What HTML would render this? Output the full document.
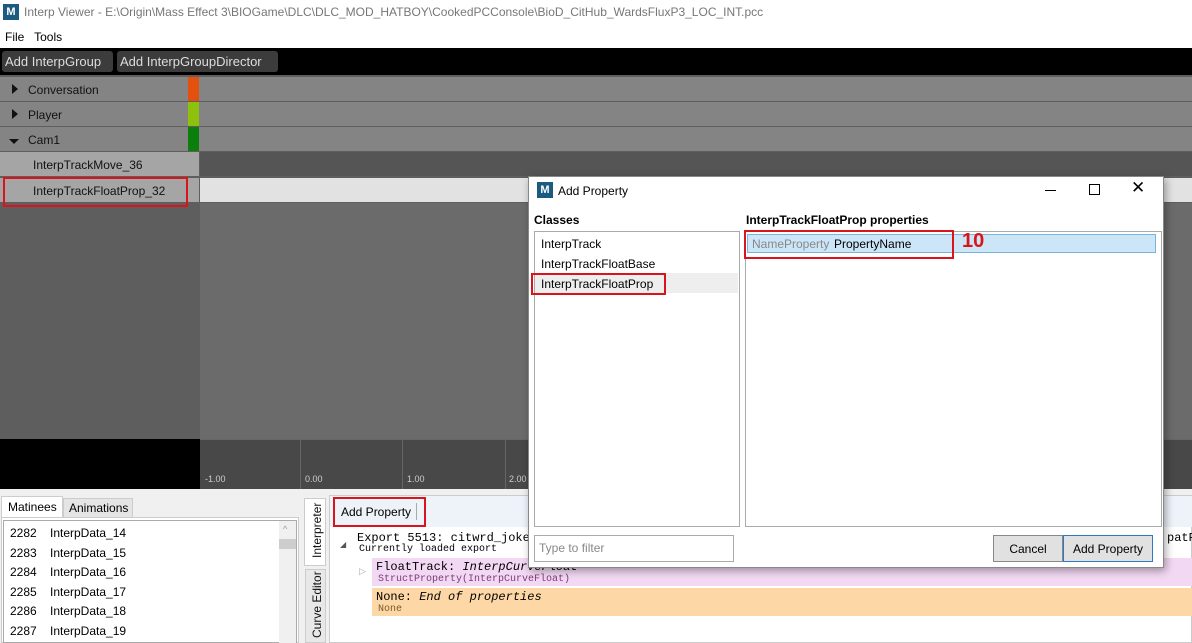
<!DOCTYPE html>
<html><head><style>
*{margin:0;padding:0;box-sizing:border-box}
body{width:1192px;height:643px;overflow:hidden;position:relative;font-family:"Liberation Sans",sans-serif;font-size:12px;background:#f0f0f0}
.a{position:absolute;white-space:nowrap}
.mono{font-family:"Liberation Mono",monospace;font-size:11px}
.red{position:absolute;border:2px solid #d9141b}
</style></head><body>
<div class="a" style="left:0;top:0;width:1192px;height:24px;background:#fff"></div>
<div class="a" style="left:3px;top:4px;width:16px;height:16px;background:#1c5a80;color:#fff;font-weight:bold;font-size:11px;text-align:center;line-height:16px">M</div>
<div class="a" style="left:24px;top:5px;color:#777;font-size:12px">Interp Viewer - E:\Origin\Mass Effect 3\BIOGame\DLC\DLC_MOD_HATBOY\CookedPCConsole\BioD_CitHub_WardsFluxP3_LOC_INT.pcc</div>
<div class="a" style="left:0;top:24px;width:1192px;height:24px;background:#fff"></div>
<div class="a" style="left:5px;top:30px">File&nbsp;&nbsp; Tools</div>
<div class="a" style="left:0;top:48px;width:1192px;height:27px;background:#000"></div>
<div class="a" style="left:2px;top:51px;width:111px;height:21px;background:#3c3c3c;border-radius:3px;color:#ddd;font-size:13px;padding:3px 3px;overflow:hidden">Add InterpGroup</div>
<div class="a" style="left:117px;top:51px;width:161px;height:21px;background:#3c3c3c;border-radius:3px;color:#ddd;font-size:13px;padding:3px 3px">Add InterpGroupDirector</div>
<div class="a" style="left:0;top:75px;width:1192px;height:364px;background:#5e5e5e"></div>
<div class="a" style="left:200px;top:203px;width:992px;height:236px;background:#6b6b6b"></div>
<div class="a" style="left:0;top:77px;width:1192px;height:24px;background:#848484"></div>
<div class="a" style="left:0;top:102px;width:1192px;height:24px;background:#848484"></div>
<div class="a" style="left:0;top:127px;width:1192px;height:24px;background:#848484"></div>
<div class="a" style="left:188px;top:77px;width:11px;height:24px;background:#e4510e"></div>
<div class="a" style="left:188px;top:102px;width:11px;height:24px;background:#8dc10c"></div>
<div class="a" style="left:188px;top:127px;width:11px;height:24px;background:#0b7f0b"></div>
<div class="a" style="left:12px;top:84px;width:0;height:0;border-left:6px solid #111;border-top:5px solid transparent;border-bottom:5px solid transparent"></div>
<div class="a" style="left:12px;top:109px;width:0;height:0;border-left:6px solid #111;border-top:5px solid transparent;border-bottom:5px solid transparent"></div>
<div class="a" style="left:9px;top:139px;width:0;height:0;border-top:5px solid #111;border-left:5px solid transparent;border-right:5px solid transparent"></div>
<div class="a" style="left:28px;top:83px;color:#111">Conversation</div>
<div class="a" style="left:28px;top:108px;color:#111">Player</div>
<div class="a" style="left:28px;top:133px;color:#111">Cam1</div>
<div class="a" style="left:0;top:152px;width:199px;height:24px;background:#a5a5a5"></div>
<div class="a" style="left:200px;top:152px;width:992px;height:24px;background:#555"></div>
<div class="a" style="left:0;top:178px;width:199px;height:24px;background:#a5a5a5"></div>
<div class="a" style="left:200px;top:178px;width:992px;height:24px;background:#e2e2e2"></div>
<div class="a" style="left:33px;top:158px;color:#111">InterpTrackMove_36</div>
<div class="a" style="left:33px;top:184px;color:#111">InterpTrackFloatProp_32</div>
<div class="red" style="left:3px;top:177px;width:185px;height:30px"></div>
<div class="a" style="left:0;top:439px;width:200px;height:50px;background:#000"></div>
<div class="a" style="left:200px;top:439px;width:992px;height:50px;background:#484848;border-top:1px solid #666"></div>
<div class="a" style="left:300px;top:440px;width:1px;height:49px;background:#666"></div>
<div class="a" style="left:402px;top:440px;width:1px;height:49px;background:#666"></div>
<div class="a" style="left:505px;top:440px;width:1px;height:49px;background:#666"></div>
<div class="a" style="left:205px;top:474px;color:#ccc;font-size:9px">-1.00</div>
<div class="a" style="left:305px;top:474px;color:#ccc;font-size:9px">0.00</div>
<div class="a" style="left:407px;top:474px;color:#ccc;font-size:9px">1.00</div>
<div class="a" style="left:509px;top:474px;color:#ccc;font-size:9px">2.00</div>
<div class="a" style="left:1px;top:496px;width:62px;height:22px;background:#fff;border:1px solid #ccc;border-bottom:none;padding:3px 6px">Matinees</div>
<div class="a" style="left:63px;top:498px;width:70px;height:20px;background:#e5e5e5;border:1px solid #ccc;padding:2px 5px">Animations</div>
<div class="a" style="left:1px;top:517px;width:298px;height:126px;background:#fff;border:1px solid #ccc"></div>
<div class="a" style="left:3px;top:520px;width:294px;height:123px;border:1px solid #aaa;background:#fff"></div>
<div class="a" style="left:279px;top:521px;width:17px;height:122px;background:#f0f0f0"></div>
<div class="a" style="left:279px;top:539px;width:17px;height:10px;background:#cdcdcd"></div>
<div class="a" style="left:283px;top:524px;color:#999;font-size:9px">^</div>
<div class="a" style="left:10px;top:524px;line-height:19.6px">2282<br>2283<br>2284<br>2285<br>2286<br>2287</div>
<div class="a" style="left:50px;top:524px;line-height:19.6px">InterpData_14<br>InterpData_15<br>InterpData_16<br>InterpData_17<br>InterpData_18<br>InterpData_19</div>
<div class="a" style="left:304px;top:498px;width:22px;height:68px;background:#fff;border:1px solid #ccc"></div>
<div class="a" style="left:305px;top:569px;width:21px;height:74px;background:#e8e8e8;border:1px solid #ccc"></div>
<div class="a" style="left:310px;top:560px;transform:rotate(-90deg);transform-origin:0 0;width:64px;font-size:12px;color:#111"><span style="position:relative;left:2px;top:0">Interpreter</span></div>
<div class="a" style="left:310px;top:638px;transform:rotate(-90deg);transform-origin:0 0;width:72px;color:#111">Curve Editor</div>
<div class="a" style="left:329px;top:495px;width:863px;height:148px;background:#fff;border:1px solid #ccc"></div>
<div class="a" style="left:330px;top:496px;width:862px;height:31px;background:#eef3fa"></div>
<div class="a" style="left:341px;top:505px">Add Property</div>
<div class="a" style="left:416px;top:503px;width:1px;height:17px;background:#aaa"></div>
<div class="red" style="left:333px;top:497px;width:93px;height:30px"></div>
<div class="a" style="left:340px;top:540px;font-size:8px;color:#555">◢</div>
<div class="a mono" style="left:357px;top:531px;font-size:12px">Export 5513: citwrd_joker_</div>
<div class="a mono" style="left:1167px;top:531px;font-size:12px">patPr</div>
<div class="a mono" style="left:359px;top:544px;font-size:10px">Currently loaded export</div>
<div class="a" style="left:372px;top:558px;width:820px;height:28px;background:#f3d8f3"></div>
<div class="a" style="left:359px;top:566px;color:#aaa;font-size:9px">▷</div>
<div class="a mono" style="left:376px;top:560px;font-size:12px">FloatTrack: <i>InterpCurveFloat</i></div>
<div class="a mono" style="left:378px;top:574px;font-size:10px;color:#7a3a7a">StructProperty(InterpCurveFloat)</div>
<div class="a" style="left:372px;top:588px;width:820px;height:28px;background:#fdd8a6"></div>
<div class="a mono" style="left:376px;top:590px;font-size:12px">None: <i>End of properties</i></div>
<div class="a mono" style="left:378px;top:604px;font-size:10px;color:#7a5a2a">None</div>
<div class="a" style="left:528px;top:176px;width:636px;height:392px;background:#fff;border:1px solid #888;box-shadow:2px 3px 8px rgba(0,0,0,.35)"></div>
<div class="a" style="left:537px;top:182px;width:16px;height:16px;background:#1c5a80;color:#fff;font-weight:bold;font-size:11px;text-align:center;line-height:16px">M</div>
<div class="a" style="left:558px;top:184px;font-size:12px">Add Property</div>
<div class="a" style="left:1045px;top:190px;width:11px;height:1px;background:#000"></div>
<div class="a" style="left:1089px;top:184px;width:11px;height:11px;border:1px solid #000"></div>
<div class="a" style="left:1131px;top:178px;font-size:17px;font-weight:200">✕</div>
<div class="a" style="left:534px;top:213px;font-weight:bold">Classes</div>
<div class="a" style="left:746px;top:213px;font-weight:bold">InterpTrackFloatProp properties</div>
<div class="a" style="left:534px;top:231px;width:206px;height:296px;border:1px solid #aaa;background:#fff"></div>
<div class="a" style="left:535px;top:273px;width:203px;height:20px;background:#eee"></div>
<div class="a" style="left:541px;top:234px;line-height:20px">InterpTrack<br>InterpTrackFloatBase<br>InterpTrackFloatProp</div>
<div class="red" style="left:531px;top:273px;width:135px;height:22px"></div>
<div class="a" style="left:745px;top:231px;width:417px;height:296px;border:1px solid #aaa;background:#fff"></div>
<div class="a" style="left:747px;top:234px;width:409px;height:19px;background:#cce6f7;border:1px solid #7ab3dc"></div>
<div class="a" style="left:752px;top:237px;color:#888">NameProperty</div>
<div class="a" style="left:834px;top:237px">PropertyName</div>
<div class="red" style="left:744px;top:230px;width:210px;height:29px"></div>
<div class="a" style="left:962px;top:230px;color:#d9141b;font-weight:bold;font-size:20px">10</div>
<div class="a" style="left:534px;top:535px;width:200px;height:27px;border:1px solid #aaa;background:#fff;color:#888;padding:5px 4px">Type to filter</div>
<div class="a" style="left:993px;top:535px;width:70px;height:27px;border:1px solid #888;background:#e1e1e1;text-align:center;padding-top:6px">Cancel</div>
<div class="a" style="left:1063px;top:535px;width:90px;height:27px;border:1px solid #2b79c0;background:#e1e1e1;text-align:center;padding-top:6px">Add Property</div>
</body></html>
